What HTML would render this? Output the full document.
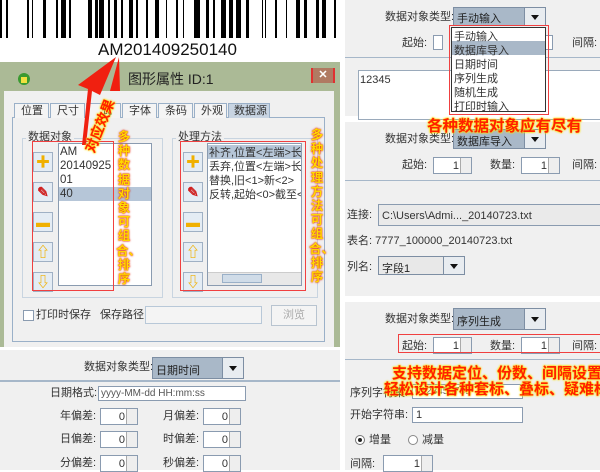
<!DOCTYPE html>
<html><head><meta charset="utf-8"><style>
*{margin:0;padding:0;box-sizing:border-box}
body{width:600px;height:470px;overflow:hidden;background:#fff;position:relative;font-family:"Liberation Sans","Noto Sans CJK SC",sans-serif;font-size:11px;color:#333}
.a{position:absolute}
.t{position:absolute;white-space:nowrap;line-height:1}
.box{position:absolute;background:#fff;border:1px solid #8a9bb0}
.combo{position:absolute;background:#a9b8c8;border:1px solid #7d8ea3;font-size:11px;padding:4px 3px;color:#222}
.combo:after{content:"";position:absolute;right:0;top:0;width:20px;height:100%;background:#e8ecf0;border-left:1px solid #7d8ea3}
.combo i{position:absolute;right:6px;top:50%;margin-top:-2px;border:4px solid transparent;border-top:5px solid #111;z-index:2}
.spin{position:absolute;background:#fff;border:1px solid #8a9bb0;height:17px;text-align:right;padding:2px 12px 0 0}
.spin:after{content:"";position:absolute;right:0;top:0;width:10px;height:15px;background:#eee;border-left:1px solid #aaa}
.btn{position:absolute;left:33px;width:20px;height:20px;background:#e4ecf4;border:1px solid #9fb0c4;text-align:center;font-size:14px;line-height:18px;color:#f0b000;font-weight:bold}
.red{position:absolute;border:1px solid #f04040}
.vt{position:absolute;width:16px;font-size:12.5px;line-height:14.2px;color:#ffd800;font-weight:bold;text-shadow:0 0 2px #e02000,0 0 1px #e02000;text-align:center;z-index:5;font-family:"Noto Sans CJK SC",sans-serif}
.ht{position:absolute;white-space:nowrap;color:#ff2000;font-weight:bold;text-shadow:0 0 2px #ffe000,0 0 2px #ffe000,0 0 1px #ffe000;z-index:5}
.gray{position:absolute;background:#f0f0f0}
.hr{position:absolute;height:2px;background:#a6b7c9}
</style></head><body>
<svg class="a" style="left:0;top:0" width="340" height="40">
<g fill="#000">
<rect x="0" y="0" width="2" height="38"/><rect x="6" width="2" height="38"/><rect x="27" width="2" height="38"/><rect x="32" width="1" height="38"/><rect x="43" width="3" height="38"/><rect x="56" width="2" height="38"/><rect x="61" width="5" height="38"/><rect x="69" width="2" height="38"/><rect x="88" width="4" height="38"/><rect x="95" width="3" height="38"/><rect x="99" width="5" height="38"/><rect x="108" width="2" height="38"/><rect x="114" width="3" height="38"/><rect x="121" width="2" height="38"/><rect x="129" width="4" height="38"/><rect x="136" width="2" height="38"/><rect x="146" width="2" height="38"/><rect x="155" width="4" height="38"/><rect x="166" width="1" height="38"/><rect x="176" width="2" height="38"/><rect x="183" width="1" height="38"/><rect x="194" width="6" height="38"/><rect x="206" width="3" height="38"/><rect x="213" width="2" height="38"/><rect x="221" width="5" height="38"/><rect x="229" width="4" height="38"/><rect x="236" width="5" height="38"/><rect x="246" width="3" height="38"/><rect x="262" width="1" height="38"/><rect x="265" width="1" height="38"/><rect x="275" width="2" height="38"/><rect x="286" width="1" height="38"/><rect x="296" width="4" height="38"/><rect x="304" width="3" height="38"/><rect x="316" width="3" height="38"/><rect x="322" width="4" height="38"/><rect x="334" width="2" height="38"/>
</g></svg>
<div class="t" style="left:98px;top:41px;font-size:17px;color:#111">AM201409250140</div>
<!-- dialog -->
<div class="a" style="left:0;top:62px;width:340px;height:285px;background:#abba96"></div>
<div class="a" style="left:18px;top:73px;width:12px;height:12px;border-radius:50%;background:#3a9a30"></div>
<div class="a" style="left:21px;top:77px;width:6px;height:6px;background:#f0e040"></div>
<div class="t" style="left:128px;top:72px;font-size:14px;color:#222">图形属性 ID:1</div>
<div class="a" style="left:311px;top:68px;width:24px;height:15px;background:#b07a62;border-left:2px solid #e03030;border-right:2px solid #e03030;color:#fff;text-align:center;font-size:11px;line-height:15px;font-weight:bold">✕</div>
<div class="a" style="left:4px;top:91px;width:330px;height:256px;background:#f0f0f0"></div>
<div class="a" style="left:12px;top:117px;width:313px;height:225px;border:1px solid #9ab0c8;background:#f0f0f0"></div>
<div class="t" style="left:14px;top:103px;width:35px;height:15px;border:1px solid #9ab0c8;border-bottom:none;background:#f4f4f4;font-size:11px;padding:2px 6px">位置</div>
<div class="t" style="left:50px;top:103px;width:35px;height:15px;border:1px solid #9ab0c8;border-bottom:none;background:#f4f4f4;padding:2px 6px">尺寸</div>
<div class="t" style="left:86px;top:103px;width:35px;height:15px;border:1px solid #9ab0c8;border-bottom:none;background:#f4f4f4;padding:2px 14px">式</div>
<div class="t" style="left:122px;top:103px;width:35px;height:15px;border:1px solid #9ab0c8;border-bottom:none;background:#f4f4f4;padding:2px 6px">字体</div>
<div class="t" style="left:158px;top:103px;width:35px;height:15px;border:1px solid #9ab0c8;border-bottom:none;background:#f4f4f4;padding:2px 6px">条码</div>
<div class="t" style="left:194px;top:103px;width:33px;height:15px;border:1px solid #9ab0c8;border-bottom:none;background:#f4f4f4;padding:2px 6px">外观</div>
<div class="t" style="left:228px;top:103px;width:42px;height:15px;border:1px solid #9ab0c8;border-bottom:none;background:#c8d4e2;padding:2px 5px">数据源</div>
<div class="a" style="left:22px;top:138px;width:141px;height:160px;border:1px solid #c8d4e0"></div>
<div class="t" style="left:26px;top:132px;background:#f0f0f0;padding:0 2px">数据对象</div>
<div class="a" style="left:172px;top:138px;width:146px;height:160px;border:1px solid #c8d4e0"></div>
<div class="t" style="left:176px;top:132px;background:#f0f0f0;padding:0 2px">处理方法</div>
<div class="box" style="left:58px;top:143px;width:94px;height:143px"></div>
<div class="t" style="left:60px;top:147px;font-size:11.5px">AM</div>
<div class="t" style="left:60px;top:161px;font-size:11.5px">20140925</div>
<div class="t" style="left:60px;top:175px;font-size:11.5px">01</div>
<div class="a" style="left:59px;top:187px;width:92px;height:14px;background:#b6c6d8"></div>
<div class="t" style="left:60px;top:189px;font-size:11.5px">40</div>
<div class="box" style="left:207px;top:143px;width:95px;height:143px;overflow:hidden"></div>
<div class="a" style="left:208px;top:145px;width:93px;height:14px;background:#b6c6d8"></div>
<div class="a" style="left:209px;top:146px;width:92px;height:56px;overflow:hidden;font-size:11px;line-height:14px;white-space:nowrap">补齐,位置&lt;左端&gt;长度&lt;<br>丢弃,位置&lt;左端&gt;长度&lt;<br>替换,旧&lt;1&gt;新&lt;2&gt;<br>反转,起始&lt;0&gt;截至&lt;16</div>
<div class="a" style="left:208px;top:272px;width:93px;height:13px;background:#e8e8e8;border-top:1px solid #ccc"></div>
<div class="a" style="left:222px;top:274px;width:40px;height:9px;background:#d0dce8;border:1px solid #9ab0c8"></div>
<div class="btn" style="top:152px">✚</div><div class="btn" style="top:182px;color:#d02020">✎</div><div class="btn" style="top:212px">▬</div><div class="btn" style="top:242px">⇧</div><div class="btn" style="top:272px">⇩</div>
<div class="btn" style="left:183px;top:152px">✚</div><div class="btn" style="left:183px;top:182px;color:#d02020">✎</div><div class="btn" style="left:183px;top:212px">▬</div><div class="btn" style="left:183px;top:242px">⇧</div><div class="btn" style="left:183px;top:272px">⇩</div>
<div class="red" style="left:32px;top:141px;width:82px;height:150px"></div>
<div class="red" style="left:180px;top:141px;width:126px;height:150px"></div>
<div class="vt" style="left:116px;top:129px">多种数据对象可组合、排序</div>
<div class="vt" style="left:309px;top:127px">多种处理方法可组合、排序</div>
<div class="a" style="left:23px;top:310px;width:11px;height:11px;border:1px solid #8a9bb0;background:#fff"></div>
<div class="t" style="left:36px;top:310px">打印时保存</div>
<div class="t" style="left:100px;top:310px">保存路径:</div>
<div class="a" style="left:145px;top:306px;width:117px;height:18px;border:1px solid #b8c8d8;background:#f4f4f4"></div>
<div class="a" style="left:271px;top:305px;width:46px;height:21px;border:1px solid #b8c4d0;background:#f4f4f4;color:#aaa;text-align:center;line-height:19px">浏览</div>
<!-- arrow -->
<svg class="a" style="left:70px;top:55px;z-index:4" width="60" height="110"><polygon points="46,2 30,40 22,36 16,90 12,90 18,34 8,30" fill="#f02010"/><polygon points="49,2 50,36 40,36" fill="#f02010"/></svg>
<div class="ht" style="left:80px;top:148px;font-size:14px;transform:rotate(-68deg);transform-origin:0 0">对应效果</div>
<!-- bottom-left -->
<div class="gray" style="left:0;top:350px;width:340px;height:120px"></div>
<div class="t" style="left:84px;top:362px">数据对象类型:</div>
<div class="combo" style="left:152px;top:357px;width:92px;height:22px">日期时间<i></i></div>
<div class="hr" style="left:0;top:380px;width:340px"></div>
<div class="t" style="left:50px;top:388px">日期格式:</div>
<div class="box" style="left:98px;top:386px;width:148px;height:15px;font-size:10px;padding:1px 2px;color:#555">yyyy-MM-dd HH:mm:ss</div>
<div class="t" style="left:60px;top:411px">年偏差:</div><div class="spin" style="left:100px;top:408px;width:38px">0</div>
<div class="t" style="left:163px;top:411px">月偏差:</div><div class="spin" style="left:203px;top:408px;width:38px">0</div>
<div class="t" style="left:60px;top:434px">日偏差:</div><div class="spin" style="left:100px;top:431px;width:38px">0</div>
<div class="t" style="left:163px;top:434px">时偏差:</div><div class="spin" style="left:203px;top:431px;width:38px">0</div>
<div class="t" style="left:60px;top:458px">分偏差:</div><div class="spin" style="left:100px;top:455px;width:38px">0</div>
<div class="t" style="left:163px;top:458px">秒偏差:</div><div class="spin" style="left:203px;top:455px;width:38px">0</div>
<!-- right top -->
<div class="gray" style="left:345px;top:0;width:255px;height:116px"></div>
<div class="t" style="left:385px;top:12px">数据对象类型:</div>
<div class="combo" style="left:453px;top:7px;width:93px;height:19px;padding:2px 3px">手动输入<i></i></div>
<div class="t" style="left:402px;top:38px">起始:</div>
<div class="box" style="left:433px;top:35px;width:10px;height:15px"></div>
<div class="box" style="left:545px;top:35px;width:8px;height:15px"></div>
<div class="t" style="left:572px;top:38px">间隔:</div>
<div class="hr" style="left:345px;top:57px;width:255px;height:1px"></div>
<div class="box" style="left:358px;top:70px;width:245px;height:50px;border-color:#9aaabb"></div>
<div class="t" style="left:360px;top:75px">12345</div>
<div class="a" style="left:451px;top:27px;width:95px;height:85px;background:#fff;border:1px solid #333"></div>
<div class="a" style="left:452px;top:41px;width:93px;height:14px;background:#a9b8c8"></div>
<div class="t" style="left:454px;top:30px;line-height:14px">手动输入<br>数据库导入<br>日期时间<br>序列生成<br>随机生成<br>打印时输入</div>
<div class="red" style="left:449px;top:25px;width:100px;height:90px"></div>
<!-- right mid -->
<div class="gray" style="left:345px;top:122px;width:255px;height:174px"></div>
<div class="ht" style="left:427px;top:114px;font-size:15.5px">各种数据对象应有尽有</div>
<div class="t" style="left:385px;top:134px">数据对象类型:</div>
<div class="combo" style="left:453px;top:129px;width:93px;height:20px;padding:3px">数据库导入<i></i></div>
<div class="t" style="left:402px;top:160px">起始:</div><div class="spin" style="left:433px;top:157px;width:39px">1</div>
<div class="t" style="left:490px;top:160px">数量:</div><div class="spin" style="left:521px;top:157px;width:39px">1</div>
<div class="t" style="left:572px;top:160px">间隔:</div>
<div class="hr" style="left:345px;top:180px;width:255px;height:1px"></div>
<div class="t" style="left:347px;top:210px">连接:</div>
<div class="a" style="left:378px;top:204px;width:225px;height:22px;background:#eaeaea;border:1px solid #8a9bb0;padding:5px 3px;font-size:11px">C:\Users\Admi..._20140723.txt</div>
<div class="t" style="left:347px;top:236px">表名: 7777_100000_20140723.txt</div>
<div class="t" style="left:347px;top:262px">列名:</div>
<div class="combo" style="left:378px;top:256px;width:87px;height:19px;padding:3px;background:#e8e8e8">字段1<i></i></div>
<!-- right bottom -->
<div class="gray" style="left:345px;top:302px;width:255px;height:168px"></div>
<div class="t" style="left:385px;top:314px">数据对象类型:</div>
<div class="combo" style="left:453px;top:308px;width:93px;height:22px">序列生成<i></i></div>
<div class="t" style="left:402px;top:341px">起始:</div><div class="spin" style="left:433px;top:337px;width:39px">1</div>
<div class="t" style="left:490px;top:341px">数量:</div><div class="spin" style="left:521px;top:337px;width:39px">1</div>
<div class="t" style="left:572px;top:341px">间隔:</div>
<div class="red" style="left:398px;top:334px;width:204px;height:19px"></div>
<div class="hr" style="left:345px;top:359px;width:255px;height:1px"></div>
<div class="t" style="left:350px;top:388px">序列字符集:</div>
<div class="box" style="left:412px;top:384px;width:111px;height:15px;font-size:10px;padding:1px 2px;color:#666">0123456789</div>
<div class="ht" style="left:392px;top:362px;font-size:15px">支持数据定位、份数、间隔设置。</div>
<div class="ht" style="left:384px;top:378px;font-size:15px">轻松设计各种套标、叠标、疑难标</div>
<div class="t" style="left:350px;top:410px">开始字符串:</div>
<div class="box" style="left:412px;top:407px;width:111px;height:16px;padding:1px 3px">1</div>
<div class="a" style="left:355px;top:435px;width:10px;height:10px;border-radius:50%;border:1px solid #777;background:#fff"></div>
<div class="a" style="left:358px;top:438px;width:4px;height:4px;border-radius:50%;background:#222"></div>
<div class="t" style="left:369px;top:435px">增量</div>
<div class="a" style="left:408px;top:435px;width:10px;height:10px;border-radius:50%;border:1px solid #888;background:#fff"></div>
<div class="t" style="left:422px;top:435px">减量</div>
<div class="t" style="left:350px;top:459px">间隔:</div><div class="spin" style="left:383px;top:455px;width:50px">1</div>
</body></html>
